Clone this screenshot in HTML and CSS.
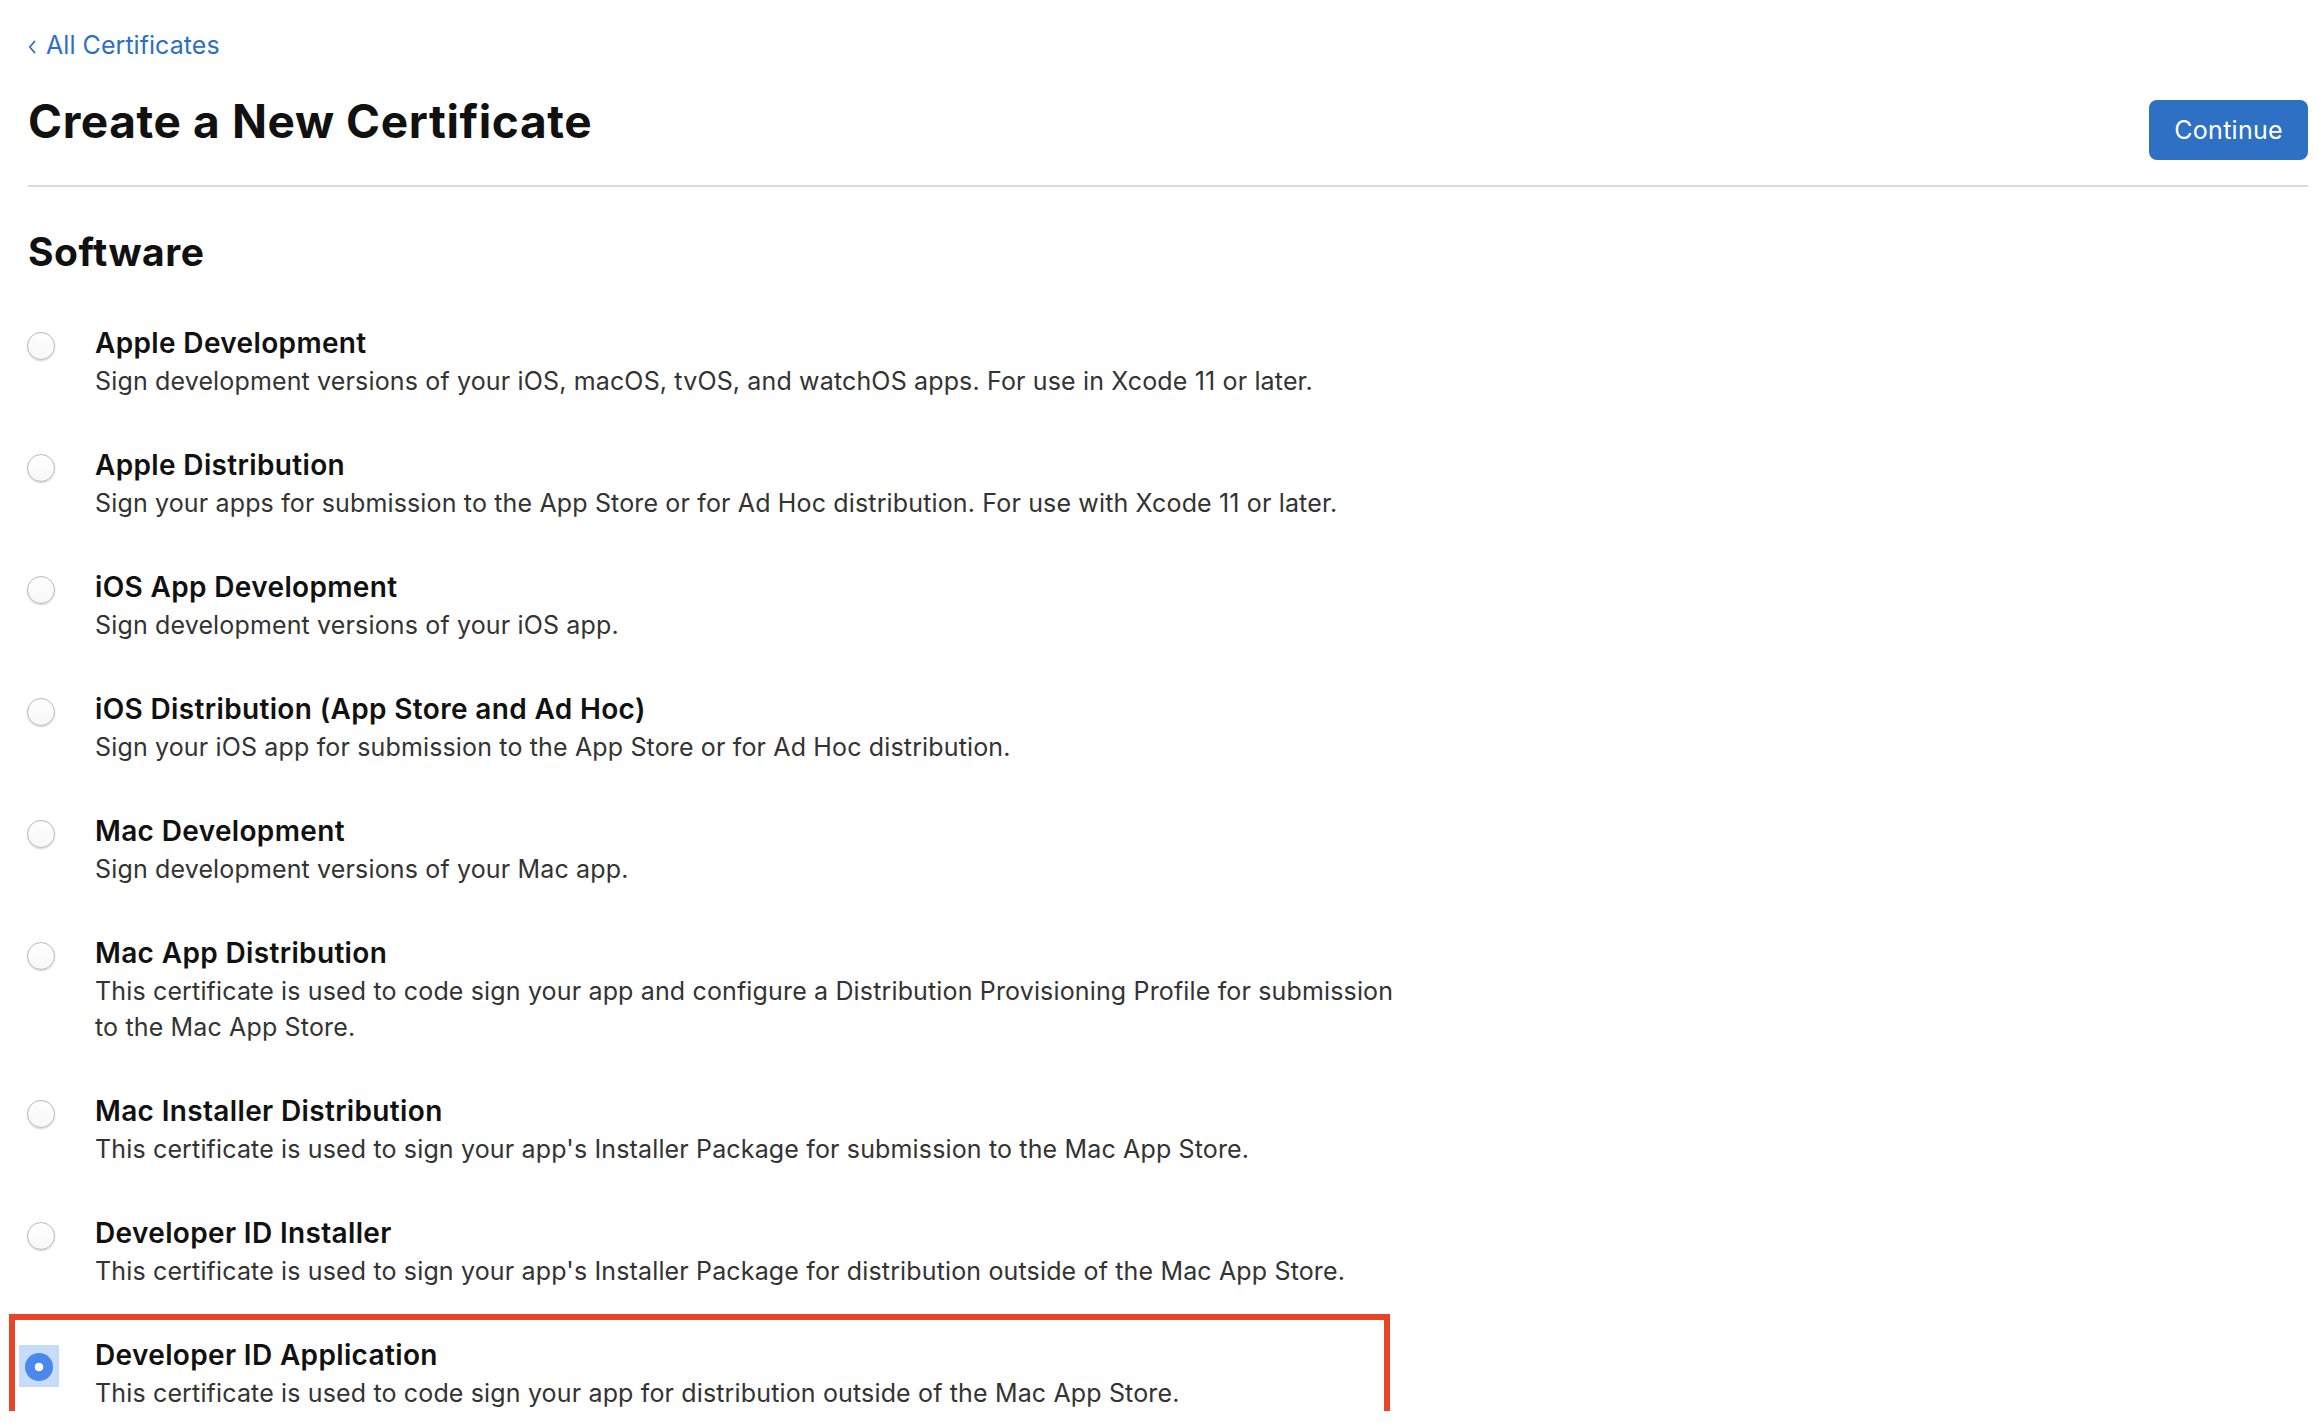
FILE: index.html
```html
<!DOCTYPE html>
<html lang="en">
<head>
<meta charset="utf-8">
<title>Create a New Certificate</title>
<link rel="stylesheet" href="styles.css">
</head>
<body>
<main class="page">
  <a class="back-link" href="#">
    <svg class="chevron" width="8" height="14" viewBox="0 0 8 14" aria-hidden="true"><path d="M6.5 1.5 L1.8 7 L6.5 12.5" fill="none" stroke="currentColor" stroke-width="1.8" stroke-linecap="round" stroke-linejoin="round"/></svg>
    <span>All Certificates</span>
  </a>
  <header class="page-header">
    <h1 class="page-title">Create a New Certificate</h1>
    <button class="btn-continue" type="button">Continue</button>
  </header>

  <section class="section">
    <h2 class="section-title">Software</h2>
    <ul class="options">
      <li class="option">
        <span class="radio"></span>
        <div class="option-text">
          <div class="option-title">Apple Development</div>
          <div class="option-desc">Sign development versions of your iOS, macOS, tvOS, and watchOS apps. For use in Xcode 11 or later.</div>
        </div>
      </li>
      <li class="option">
        <span class="radio"></span>
        <div class="option-text">
          <div class="option-title">Apple Distribution</div>
          <div class="option-desc">Sign your apps for submission to the App Store or for Ad Hoc distribution. For use with Xcode 11 or later.</div>
        </div>
      </li>
      <li class="option">
        <span class="radio"></span>
        <div class="option-text">
          <div class="option-title">iOS App Development</div>
          <div class="option-desc">Sign development versions of your iOS app.</div>
        </div>
      </li>
      <li class="option">
        <span class="radio"></span>
        <div class="option-text">
          <div class="option-title">iOS Distribution (App Store and Ad Hoc)</div>
          <div class="option-desc">Sign your iOS app for submission to the App Store or for Ad Hoc distribution.</div>
        </div>
      </li>
      <li class="option">
        <span class="radio"></span>
        <div class="option-text">
          <div class="option-title">Mac Development</div>
          <div class="option-desc">Sign development versions of your Mac app.</div>
        </div>
      </li>
      <li class="option">
        <span class="radio"></span>
        <div class="option-text">
          <div class="option-title">Mac App Distribution</div>
          <div class="option-desc">This certificate is used to code sign your app and configure a Distribution Provisioning Profile for submission to the Mac App Store.</div>
        </div>
      </li>
      <li class="option">
        <span class="radio"></span>
        <div class="option-text">
          <div class="option-title">Mac Installer Distribution</div>
          <div class="option-desc">This certificate is used to sign your app's Installer Package for submission to the Mac App Store.</div>
        </div>
      </li>
      <li class="option">
        <span class="radio"></span>
        <div class="option-text">
          <div class="option-title">Developer ID Installer</div>
          <div class="option-desc">This certificate is used to sign your app's Installer Package for distribution outside of the Mac App Store.</div>
        </div>
      </li>
      <li class="option option-selected">
        <span class="radio radio-checked"></span>
        <div class="option-text">
          <div class="option-title">Developer ID Application</div>
          <div class="option-desc">This certificate is used to code sign your app for distribution outside of the Mac App Store.</div>
        </div>
        <span class="annotation-box" aria-hidden="true"></span>
      </li>
    </ul>
  </section>
</main>
</body>
</html>
```

FILE: styles.css
```css
* {
  box-sizing: border-box;
}

html, body {
  margin: 0;
  padding: 0;
  background: #ffffff;
}

body {
  font-family: Inter, "Noto Sans", "Liberation Sans", sans-serif;
  color: #1d1d1f;
  -webkit-font-smoothing: antialiased;
}

.page {
  padding: 27px 11px 0 28px;
}

.back-link {
  display: inline-flex;
  align-items: center;
  gap: 10px;
  color: #2d6fc4;
  text-decoration: none;
  font-size: 25px;
  line-height: 36px;
  letter-spacing: 0.05px;
}

.chevron {
  display: block;
  margin-top: 3px;
}

.page-header {
  display: flex;
  justify-content: space-between;
  align-items: flex-start;
  margin-top: 30px;
  padding-bottom: 25px;
  border-bottom: 2px solid #d9d9d9;
}

.page-title {
  margin: 0;
  font-size: 46px;
  line-height: 56px;
  font-weight: 700;
  letter-spacing: 0.6px;
  color: #111111;
}

.btn-continue {
  margin-top: 7px;
  height: 60px;
  padding: 0 25px;
  border: none;
  border-radius: 8px;
  background: #2d70c4;
  color: #ffffff;
  font-family: inherit;
  font-size: 25px;
  letter-spacing: 0.3px;
  cursor: pointer;
}

.section {
  padding-top: 42px;
}

.section-title {
  margin: 0;
  font-size: 39px;
  line-height: 46px;
  font-weight: 700;
  letter-spacing: 0.5px;
  color: #111111;
}

.options {
  list-style: none;
  margin: 50px 0 0;
  padding: 0;
  display: flex;
  flex-direction: column;
  gap: 48px;
}

.option {
  position: relative;
  display: flex;
  align-items: flex-start;
  gap: 40px;
}

.radio {
  flex: none;
  width: 28px;
  height: 28px;
  margin: 7px 0 0 -1px;
  border-radius: 50%;
  border: 1.5px solid #b9b9b9;
  background: linear-gradient(#ffffff, #f7f7f7);
  box-shadow: 0 1px 1.5px rgba(0, 0, 0, 0.18);
}

.radio-checked {
  position: relative;
  margin: 16px 2px 0 -3px;
  border: none;
  box-shadow: none;
  background: radial-gradient(circle, #ffffff 0 4px, #4a88ee 4.6px);
}

.radio-checked::before {
  content: "";
  position: absolute;
  left: -6px;
  right: -6px;
  top: -8px;
  bottom: -6px;
  background: #c6dcfa;
  z-index: -1;
}

.option-selected {
  z-index: 0;
}

.option-text {
  max-width: 1300px;
}

.option-title {
  font-size: 28px;
  line-height: 36px;
  font-weight: 600;
  letter-spacing: 0.35px;
  color: #111111;
}

.option-desc {
  margin-top: 2px;
  font-size: 25px;
  line-height: 36px;
  letter-spacing: 0.15px;
  color: #333333;
}

.annotation-box {
  position: absolute;
  left: -19px;
  top: -23px;
  bottom: -6px;
  width: 1381px;
  border: 6px solid #e8442a;
  pointer-events: none;
}
```
